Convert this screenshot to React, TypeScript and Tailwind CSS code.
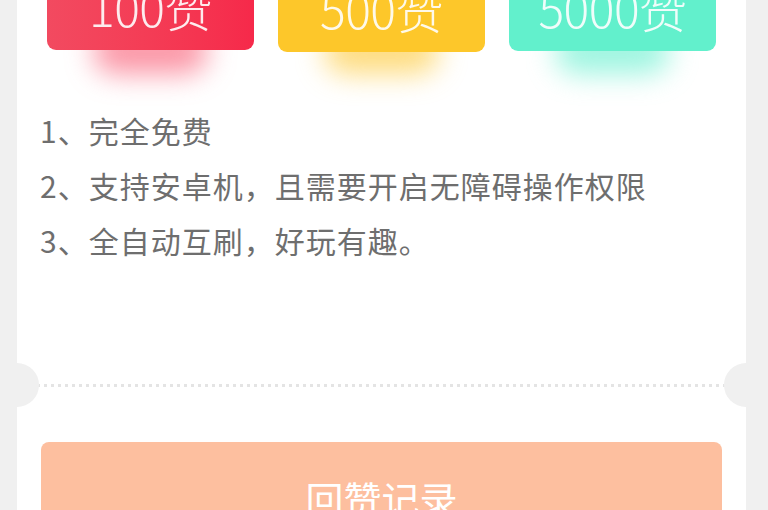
import React from "react";

const font = { fontFamily: '"Noto Sans CJK SC", "Noto Sans", sans-serif' };

function Tier({ label, cls, glow }: { label: string; cls: string; glow: string }) {
  return (
    <div className="relative">
      <div className={`absolute left-[22%] right-[22%] bottom-[-22px] h-[46px] rounded-full blur-[14px] ${glow}`} />
      <div
        className={`relative h-[84px] rounded-[9px] flex items-end justify-center pb-[20px] text-white text-[48px] font-light leading-none tracking-[-0.5px] ${cls}`}
      >
        <span className="opacity-90">{label}</span>
      </div>
    </div>
  );
}

export default function App() {
  return (
    <div className="w-[768px] h-[510px] overflow-hidden bg-[#f0f0f0]" style={font}>
      <div className="mx-[17px] w-[729px] h-[560px] bg-white relative flex flex-col">
        <div className="grid grid-cols-3 gap-[24px] px-[30px] mt-[-34px]">
          <Tier label="100赞" cls="bg-gradient-to-r from-[#f24a60] to-[#f6294a]" glow="bg-[#f8506a]/60" />
          <Tier label="500赞" cls="bg-[#fdc72a] mt-[2px]" glow="bg-[#fdc52a]/60" />
          <Tier label="5000赞" cls="bg-[#62f0cc] mt-[1px]" glow="bg-[#5cefcc]/60" />
        </div>
        <div className="mt-[51px] pl-[23px] flex flex-col text-[30px] leading-[55px] tracking-[1px] text-[#6e6e6e]">
          <div>1、完全免费</div>
          <div>2、支持安卓机，且需要开启无障碍操作权限</div>
          <div>3、全自动互刷，好玩有趣。</div>
        </div>
        <div className="mt-[116px] ml-[13px] mr-[21px] h-[3px] bg-[repeating-linear-gradient(90deg,#e4e4e4_0px,#e4e4e4_3px,transparent_3px,transparent_7px)]" />
        <div className="absolute left-[-22px] top-[363px] w-[44px] h-[44px] rounded-full bg-[#f0f0f0]" />
        <div className="absolute right-[-22px] top-[363px] w-[44px] h-[44px] rounded-full bg-[#f0f0f0]" />
        <div className="mt-[55px] mx-[24px] h-[110px] shrink-0 rounded-[8px] bg-[#fdbf9f] flex justify-center pt-[37px] text-white text-[38px] leading-none">
          回赞记录
        </div>
      </div>
    </div>
  );
}
